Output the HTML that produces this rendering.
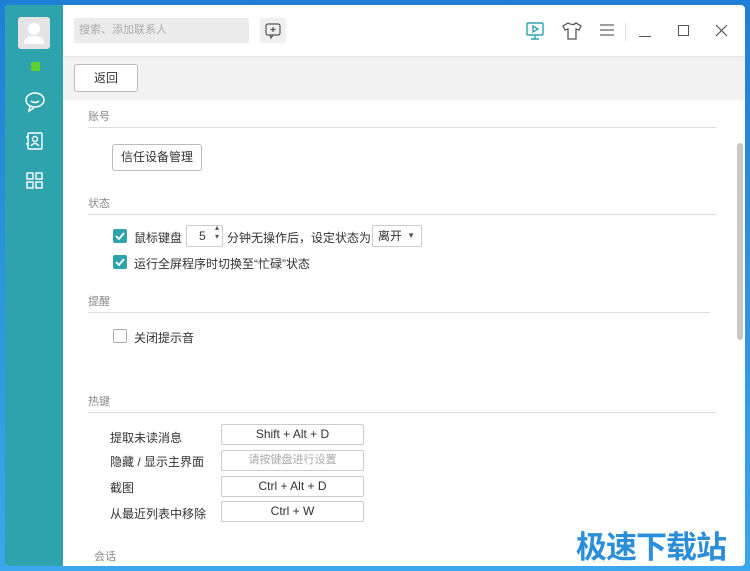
<!DOCTYPE html>
<html><head><meta charset="utf-8"><style>
*{margin:0;padding:0;box-sizing:border-box}
body{width:750px;height:571px;overflow:hidden;background:linear-gradient(180deg,#1f7fd6,#3aa7ee);font-family:"Liberation Sans","Noto Sans CJK SC",sans-serif;font-size:12px;color:#333;position:relative}
.win{position:absolute;left:5px;top:5px;width:740px;height:561px;background:#fff;border-radius:4px;overflow:hidden}
.side{position:absolute;left:0;top:0;width:58px;height:100%;background:#2fa3ad}
.abs{position:absolute}
.sec{position:absolute;left:88px;width:622px;border-bottom:1px solid #ddd;color:#888;font-size:11px;padding-bottom:3px}
.btn{position:absolute;border:1px solid #bbb;border-radius:3px;background:#fff;text-align:center;font-size:12px;color:#333}
.cb{position:absolute;width:14px;height:14px;border-radius:2px;background:#2fa3ad}
.key{position:absolute;left:221px;width:143px;height:21px;border:1px solid #ccc;border-radius:2px;text-align:center;line-height:19px;font-size:12px}
.lbl{position:absolute;left:110px;font-size:12px}
</style></head><body>
<div class="win">
 <div class="side">
  <div class="abs" style="left:13px;top:12px;width:32px;height:32px;background:#e4e4e4;border-radius:3px">
   <svg width="32" height="32"><circle cx="16" cy="12" r="6" fill="#fff"/><path d="M6 27q0-8 10-8t10 8z" fill="#fff"/></svg></div>
  <div class="abs" style="left:26px;top:57px;width:9px;height:9px;background:#5ed12c;border-radius:1px"></div>
  <svg class="abs" style="left:19px;top:86px" width="22" height="22" fill="none" stroke="#fff" stroke-width="1.5"><ellipse cx="11" cy="9" rx="9" ry="7"/><path d="M6 15l-1 5 5-3"/><path d="M7 10q4 3 8 0"/></svg>
  <svg class="abs" style="left:20px;top:126px" width="20" height="20" fill="none" stroke="#fff" stroke-width="1.4"><rect x="3" y="2" width="14" height="16" rx="1"/><circle cx="10" cy="8" r="2.5"/><path d="M6 15q4-5 8 0"/><path d="M1 6h3M1 13h3"/></svg>
  <svg class="abs" style="left:21px;top:167px" width="18" height="18" fill="none" stroke="#fff" stroke-width="1.4"><rect x="1" y="1" width="6" height="6"/><rect x="10" y="1" width="6" height="6"/><rect x="1" y="10" width="6" height="6"/><rect x="10" y="10" width="6" height="6"/></svg>
 </div>
 <div class="abs" style="left:69px;top:13px;width:175px;height:25px;background:#ececec;border-radius:2px;color:#aaa;font-size:11px;line-height:25px;padding-left:5px">搜索、添加联系人</div>
 <div class="abs" style="left:255px;top:13px;width:26px;height:25px;background:#f0f0f0;border-radius:2px">
  <svg width="26" height="25" fill="none" stroke="#555" stroke-width="1.2"><rect x="6" y="6" width="14" height="11" rx="2"/><path d="M10 17l1 3 2-3M13 9v5M10.5 11.5h5"/></svg></div>
 <svg class="abs" style="left:519px;top:15px" width="22" height="22" fill="none" stroke="#2fa3ad" stroke-width="1.4"><rect x="3" y="3" width="16" height="12" rx="1"/><path d="M9 6v6l5-3z"/><path d="M7 19h8M11 15v4"/></svg>
 <svg class="abs" style="left:556px;top:15px" width="22" height="22" fill="none" stroke="#555" stroke-width="1.3"><path d="M7 3l-5 3 2 4 3-1v10h8V9l3 1 2-4-5-3q-3 3-8 0z"/></svg>
 <svg class="abs" style="left:593px;top:16px" width="18" height="18" stroke="#666" stroke-width="1.2"><path d="M2 4h14M2 9h14M2 14h14"/></svg>
 <div class="abs" style="left:620px;top:18px;width:1px;height:18px;background:#ddd"></div>
 <div class="abs" style="left:634px;top:31px;width:12px;height:1px;background:#555"></div>
 <div class="abs" style="left:673px;top:20px;width:11px;height:11px;border:1.2px solid #555"></div>
 <svg class="abs" style="left:710px;top:19px" width="13" height="13" stroke="#555" stroke-width="1.2"><path d="M1 1l11 11M12 1L1 12"/></svg>
 <div class="abs" style="left:58px;top:51px;width:682px;height:44px;background:#f2f2f2;border-top:1px solid #e8e8e8"></div>
 <div class="btn" style="left:69px;top:59px;width:64px;height:28px;line-height:26px">返回</div>
 <div class="abs" style="left:732px;top:138px;width:6px;height:197px;background:#c8c8c8;border-radius:3px"></div>
</div>
<div class="sec" style="top:108px;width:628px">账号</div>
<div class="btn" style="left:112px;top:144px;width:90px;height:27px;line-height:25px">信任设备管理</div>
<div class="sec" style="top:195px;width:628px">状态</div>
<div class="cb" style="left:113px;top:229px"><svg width="14" height="14" fill="none" stroke="#fff" stroke-width="1.8"><path d="M3 7l3 3 5-6"/></svg></div>
<div class="lbl" style="left:134px;top:229px">鼠标键盘</div>
<div class="abs" style="left:186px;top:225px;width:37px;height:22px;border:1px solid #ccc;border-radius:2px;font-size:12px;line-height:20px;padding-left:12px">5<span style="position:absolute;right:3px;top:-3px;font-size:8px;line-height:9px;color:#555">▴<br>▾</span></div>
<div class="lbl" style="left:227px;top:229px">分钟无操作后，设定状态为</div>
<div class="abs" style="left:372px;top:225px;width:50px;height:22px;border:1px solid #ccc;border-radius:2px;font-size:12px;line-height:20px;padding-left:5px">离开<span style="position:absolute;right:6px;top:0;font-size:8px;color:#555">▼</span></div>
<div class="cb" style="left:113px;top:255px"><svg width="14" height="14" fill="none" stroke="#fff" stroke-width="1.8"><path d="M3 7l3 3 5-6"/></svg></div>
<div class="lbl" style="left:134px;top:255px">运行全屏程序时切换至“忙碌”状态</div>
<div class="sec" style="top:293px">提醒</div>
<div class="abs" style="left:113px;top:329px;width:14px;height:14px;border:1px solid #aaa;border-radius:2px"></div>
<div class="lbl" style="left:134px;top:329px">关闭提示音</div>
<div class="sec" style="top:393px;width:628px">热键</div>
<div class="lbl" style="top:429px">提取未读消息</div><div class="key" style="top:424px">Shift + Alt + D</div>
<div class="lbl" style="top:453px">隐藏 / 显示主界面</div><div class="key" style="top:450px;color:#aaa;font-size:11px">请按键盘进行设置</div>
<div class="lbl" style="top:479px">截图</div><div class="key" style="top:476px">Ctrl + Alt + D</div>
<div class="lbl" style="top:505px">从最近列表中移除</div><div class="key" style="top:501px">Ctrl + W</div>
<div class="abs" style="left:94px;top:548px;font-size:11px;color:#888">会话</div>
<div class="abs" style="left:576px;top:522px;font-size:31px;font-weight:bold;color:#2a8fd8;letter-spacing:-1px">极速下载站</div>
</body></html>
